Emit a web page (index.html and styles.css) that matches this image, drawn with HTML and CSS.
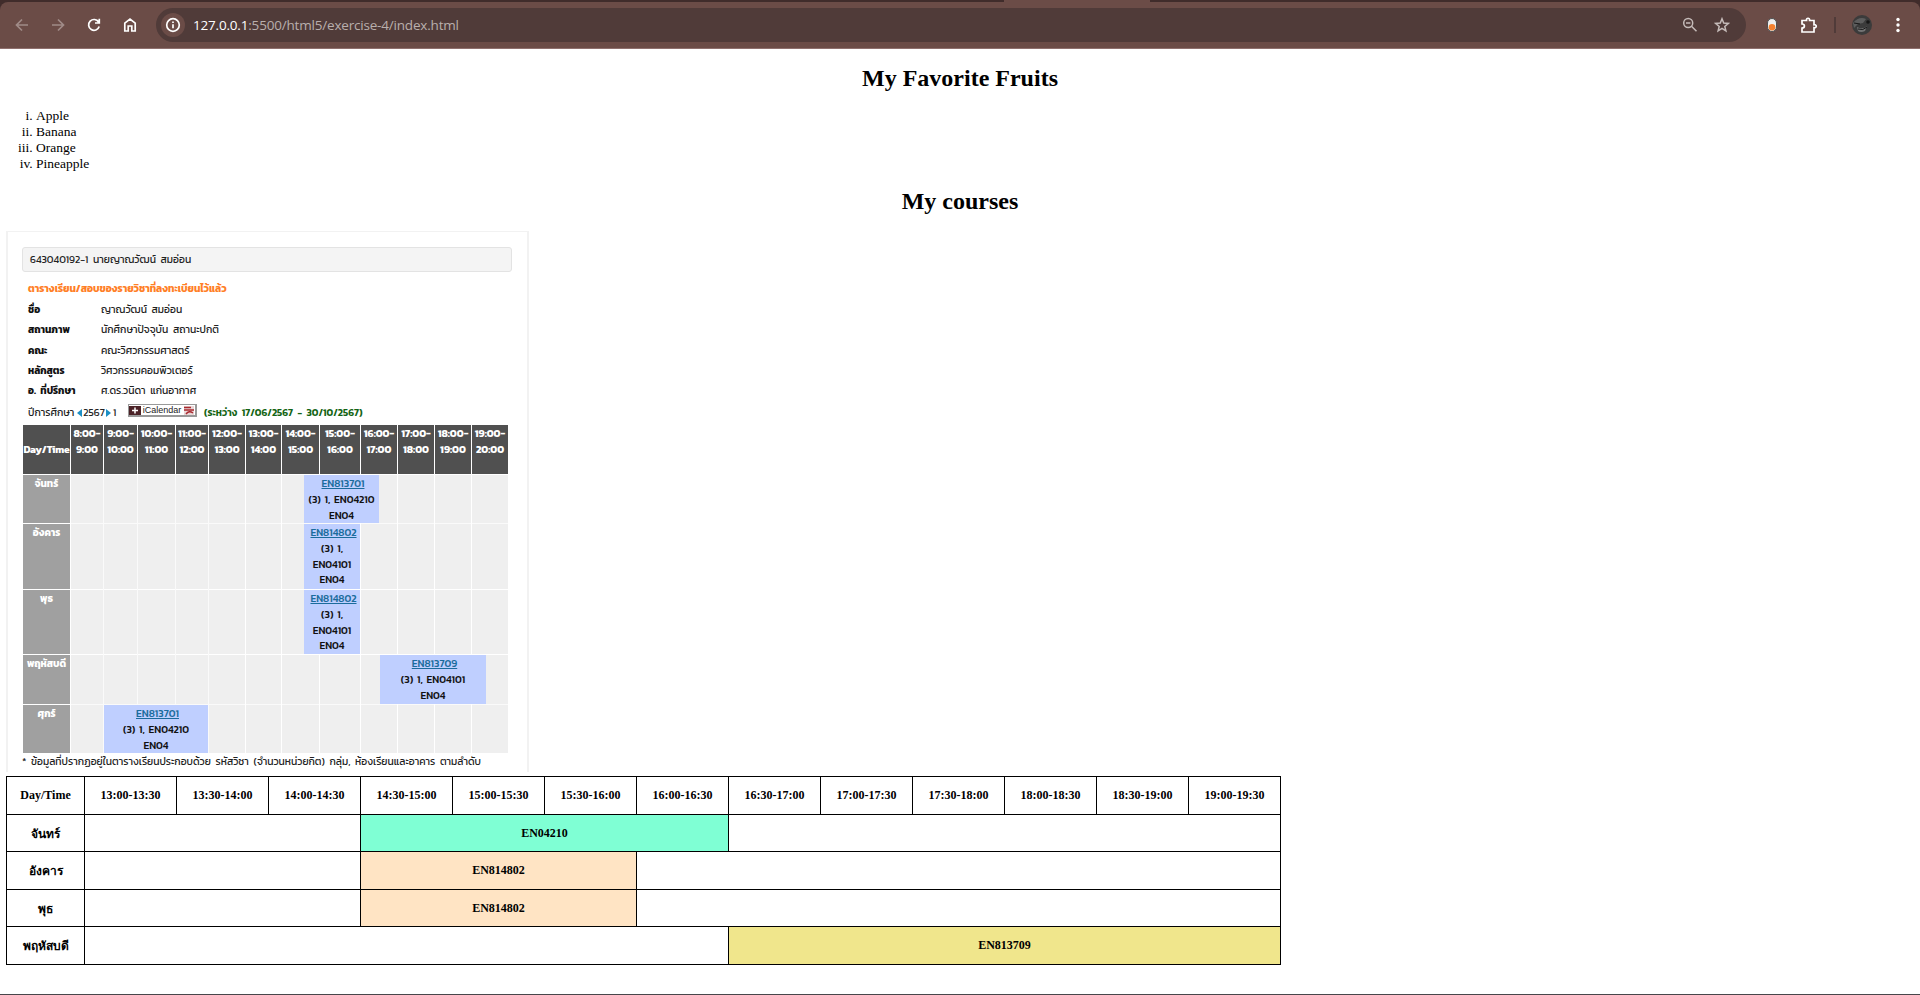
FILE: index.html
```
<!DOCTYPE html>
<html lang="th">
<head>
<meta charset="utf-8">
<title>My Favorite Fruits</title>
<link rel="stylesheet" href="styles.css">
</head>
<body>
<header class="chrome">
  <div class="tabline"><span class="tab"></span></div>
  <div class="toolbar">
    <svg class="ic dim" viewBox="0 0 16 16"><path d="M14 8H3M8 2.500 2.500 8 8 13.500"/></svg>
    <svg class="ic dim" viewBox="0 0 16 16"><path d="M2 8h11M8 2.500 13.500 8 8 13.500"/></svg>
    <svg class="ic" viewBox="0 0 16 16"><path d="M12.600 5A5.400 5.400 0 1 0 13.200 9.500M13.300 1.800V6H9"/></svg>
    <svg class="ic" viewBox="0 0 16 16"><path d="M2.800 6.200 8 2l5.200 4.200V14H9.800V9H6.200v5H2.800z"/></svg>
    <div class="omnibox">
      <span class="info"><svg class="ic" viewBox="0 0 16 16"><circle cx="8" cy="8" r="6.300"/><path d="M8 7.300v4M8 4.500v1.600"/></svg></span>
      <span class="url"><b>127.0.0.1</b>:5500/html5/exercise-4/index.html</span>
      <svg class="ic pale lens" viewBox="0 0 16 16"><circle cx="6.200" cy="6" r="4.500"/><path d="M4 6h4.400M9.500 9.300l5 5"/></svg>
      <svg class="ic pale" viewBox="0 0 16 16"><path d="m8 1.800 1.700 4.300 4.600.3-3.500 3 1.100 4.500L8 11.400l-3.900 2.500 1.100-4.500-3.500-3 4.600-.3z"/></svg>
    </div>
    <svg class="ext" viewBox="0 0 12 16"><rect x="1.500" y="1.500" width="9" height="13" rx="4.500" fill="#eee" stroke="#4c5052"/><circle cx="6" cy="10.300" r="3.300" fill="#f5812f"/></svg>
    <svg class="puzzle" viewBox="0 0 18 18"><path d="M2 4.500h4.500C6 1.500 10 1.500 9.600 4.500H14v4.200c3-.4 3 3.500 0 3V16H2v-4c3.200 0 3.200-4 0-4z"/></svg>
    <span class="sep"></span>
    <svg class="avatar" viewBox="0 0 20 20"><circle cx="10" cy="10" r="10" fill="#3b3b3b"/><path d="M1 8q6-7 13-4l-3 4-5 1-4 4z" fill="#5d5d5d"/><path d="M5 12q6 3 10-1l-2 5q-4 2-7 0z" fill="#737373"/><path d="M2 8l6 1M6 14q5 2 9-2" stroke="#171717" fill="none"/><circle cx="16" cy="7" r="1.800" fill="#161616"/></svg>
    <svg class="dots" viewBox="0 0 6 16"><circle cx="3" cy="2.500" r="1.700"/><circle cx="3" cy="8" r="1.700"/><circle cx="3" cy="13.500" r="1.700"/></svg>
  </div>
</header>
<main class="page">
  <h1>My Favorite Fruits</h1>
  <ol class="fruits"><li>Apple</li><li>Banana</li><li>Orange</li><li>Pineapple</li></ol>
  <h1 class="second">My courses</h1>
  <section class="card">
    <div class="student">643040192-1 นายญาณวัฒน์ สมอ่อน</div>
    <div class="info-title">ตารางเรียน/สอบของรายวิชาที่ลงทะเบียนไว้แล้ว</div>
    <dl class="details">
      <dt>ชื่อ</dt><dd>ญาณวัฒน์ สมอ่อน</dd>
      <dt>สถานภาพ</dt><dd>นักศึกษาปัจจุบัน สถานะปกติ</dd>
      <dt>คณะ</dt><dd>คณะวิศวกรรมศาสตร์</dd>
      <dt>หลักสูตร</dt><dd>วิศวกรรมคอมพิวเตอร์</dd>
      <dt>อ. ที่ปรึกษา</dt><dd>ศ.ดร.วนิดา แก่นอากาศ</dd>
    </dl>
    <div class="term">
      <span class="year">ปีการศึกษา</span><i class="prev"></i><span class="num">2567</span><i class="next"></i><span class="one">1</span>
      <span class="ical"><svg viewBox="0 0 12 9"><rect width="12" height="9" fill="#4b2227"/><path d="M3 4.500h6M6 1.500v6" stroke="#fff" stroke-width="1.500"/></svg><span>iCalendar</span><svg viewBox="0 0 12 9"><rect x="1" width="10" height="9" fill="#e9d6d6"/><path d="M1 1.500h7M1 4h10M3 8q3-4 7-1" stroke="#a8292f" fill="none" stroke-width="1.400"/></svg></span>
      <span class="range">(ระหว่าง 17/06/2567 - 30/10/2567)</span>
    </div>
    <div class="grid">
      <div class="h day">Day/Time</div><div class="h">8:00-<br>9:00</div><div class="h">9:00-<br>10:00</div><div class="h">10:00-<br>11:00</div><div class="h">11:00-<br>12:00</div><div class="h">12:00-<br>13:00</div><div class="h">13:00-<br>14:00</div><div class="h">14:00-<br>15:00</div><div class="h">15:00-<br>16:00</div><div class="h">16:00-<br>17:00</div><div class="h">17:00-<br>18:00</div><div class="h">18:00-<br>19:00</div><div class="h">19:00-<br>20:00</div>
      <div class="d r2">จันทร์</div><div class="d r3">อังคาร</div><div class="d r4">พุธ</div><div class="d r5">พฤหัสบดี</div><div class="d r6">ศุกร์</div>
      <div class="bg"></div>
      <div class="ev mon"><a>EN813701</a><br>(3) 1, EN04210<br>EN04</div>
      <div class="ev tue"><a>EN814802</a><br>(3) 1,<br>EN04101<br>EN04</div>
      <div class="ev wed"><a>EN814802</a><br>(3) 1,<br>EN04101<br>EN04</div>
      <div class="ev thu"><a>EN813709</a><br>(3) 1, EN04101<br>EN04</div>
      <div class="ev fri"><a>EN813701</a><br>(3) 1, EN04210<br>EN04</div>
    </div>
    <p class="note">* ข้อมูลที่ปรากฏอยู่ในตารางเรียนประกอบด้วย รหัสวิชา (จำนวนหน่วยกิต) กลุ่ม, ห้องเรียนและอาคาร ตามลำดับ</p>
  </section>
  <div class="courses">
    <div class="c">Day/Time</div><div class="c">13:00-13:30</div><div class="c">13:30-14:00</div><div class="c">14:00-14:30</div><div class="c">14:30-15:00</div><div class="c">15:00-15:30</div><div class="c">15:30-16:00</div><div class="c">16:00-16:30</div><div class="c">16:30-17:00</div><div class="c">17:00-17:30</div><div class="c">17:30-18:00</div><div class="c">18:00-18:30</div><div class="c">18:30-19:00</div><div class="c">19:00-19:30</div>
    <div class="c">จันทร์</div><div class="c s3"></div><div class="c s4 aqua">EN04210</div><div class="c s6"></div>
    <div class="c">อังคาร</div><div class="c s3"></div><div class="c s3 bisque">EN814802</div><div class="c s7"></div>
    <div class="c">พุธ</div><div class="c s3"></div><div class="c s3 bisque">EN814802</div><div class="c s7"></div>
    <div class="c">พฤหัสบดี</div><div class="c s7"></div><div class="c s6 khaki">EN813709</div>
  </div>
</main>
</body>
</html>
```
FILE: styles.css
```
* { box-sizing: border-box; }
body { margin: 0; height: 995px; overflow: hidden; display: flex; flex-direction: column; background: #fff; color: #000; font-family: "Liberation Serif", serif; }
.chrome { height: 49px; flex: none; background: #402c2b; border-bottom: 1px solid #8f706e; display: flex; flex-direction: column; }
.tabline { height: 2px; padding-left: 1004px; display: flex; }
.tab { width: 146px; background: #6b4c47; }
.toolbar { flex: 1; display: flex; align-items: center; background: #6b4c47; border-radius: 8px 8px 0 0; padding: 0 0 0 14px; }
.ic { width: 16px; height: 16px; flex: none; fill: none; stroke: #fff; stroke-width: 1.700; }
.toolbar > .ic { margin-right: 20px; }
.toolbar > .dim { stroke: #a08b88; }
.pale { stroke: #c5bbb9; stroke-width: 1.500; }
.omnibox { width: 1590px; height: 34px; margin-left: -2px; border-radius: 17px; background: #503b39; display: flex; align-items: center; padding: 0 16px 0 5px; }
.info { width: 24px; height: 24px; border-radius: 50%; background: #6b4c47; display: flex; align-items: center; justify-content: center; }
.url { flex: 1; margin-left: 8px; font: 13.500px/20px "Open Sans", sans-serif; letter-spacing: -.190px; color: #b9afad; white-space: nowrap; }
.url b { font-weight: 400; color: #fff; }
.lens { margin-right: 16px; }
.ext { width: 12px; height: 16px; margin-left: 20px; }
.puzzle { width: 18px; height: 18px; margin-left: 22px; fill: none; stroke: #fff; stroke-width: 1.700; }
.sep { width: 2px; height: 16px; margin-left: 16px; background: #503b39; }
.avatar { width: 20px; height: 20px; margin-left: 16px; }
.dots { width: 6px; height: 16px; margin-left: 23px; fill: #fff; }

.page { flex: 1; padding: 15px 6px 0; border-bottom: 1px solid #47464a; }
h1 { margin: 0; height: 28px; font-size: 24px; line-height: 28px; text-align: center; }
.fruits { margin: 16px 0 0; padding-left: 30px; list-style: lower-roman; font-size: 13.500px; line-height: 16px; }
.second { margin-top: 15px; }

.card { width: 523px; height: 541px; margin-top: 16px; padding: 15px 15px 0 14px; border: solid #f2f2f2; border-width: 1px 2px 0; font: 10.300px/16px "Kanit", "Prompt", "Inter", "Noto Sans Thai", sans-serif; word-spacing: 2.300px; color: #222; white-space: nowrap; }
.student { height: 25px; border: 1px solid #e3e3e3; border-radius: 3px; background: #f4f4f4; padding: 4px 7px; }
.info-title { margin: 7px 0 0 6px; height: 20px; line-height: 20px; color: #ff7f27; font-size: 10.100px; font-weight: 700; }
.details { margin: 0 0 0 6px; height: 102px; display: grid; grid-template-columns: 73px 1fr; grid-auto-rows: 20.300px; line-height: 21px; }
.details dt { font-size: 10px; font-weight: 700; color: #111; }
.details dd { margin: 0; }
.term { display: flex; align-items: center; height: 24px; margin-left: 6px; }
.year { width: 49px; }
.prev, .next { border: 4px solid transparent; }
.prev { border-left: 0; border-right: 5px solid #1c8fc4; }
.next { border-right: 0; border-left: 5px solid #1c8fc4; }
.num { width: 24px; text-align: center; }
.one { width: 15px; margin-left: 1px; padding-left: 1px; }
.ical { width: 69px; height: 13px; margin: -5px 7px 0 1px; display: flex; align-items: center; justify-content: space-between; border: 1px solid #999; border-width: 1px 2px 2px 1px; background: #fff; font: 9px/10px "Liberation Sans", sans-serif; }
.ical svg { width: 12px; height: 9px; }
.range { color: #146414; font-size: 10px; font-weight: 600; }
.grid { width: 485px; height: 328px; margin-left: 1px; display: grid; gap: 1px; grid-template-columns: 47px 32px 33px 37px 32px 36px 35px 37px 40px 36px 36px 36px 36px; grid-template-rows: 49px 48px 65px 64px 49px 48px; text-align: center; }
.h { background: #505050; color: #fff; font-size: 10.400px; font-weight: 700; line-height: 16px; padding-top: 1px; }
.day { padding-top: 17px; letter-spacing: -.150px; }
.d { grid-column: 1; background: #a0a0a0; color: #fff; font-size: 10px; font-weight: 700; padding-top: 1px; }
.r2 { grid-row: 2; } .r3 { grid-row: 3; } .r4 { grid-row: 4; } .r5 { grid-row: 5; } .r6 { grid-row: 6; }
.bg { grid-column: 2 / -1; grid-row: 2 / -1; background:
  linear-gradient(#fafafa, #fafafa) 32px 0 / 1px 100% no-repeat, linear-gradient(#fafafa, #fafafa) 66px 0 / 1px 100% no-repeat,
  linear-gradient(#fafafa, #fafafa) 104px 0 / 1px 100% no-repeat, linear-gradient(#fafafa, #fafafa) 137px 0 / 1px 100% no-repeat,
  linear-gradient(#fff, #fff) 174px 0 / 1px 100% no-repeat, linear-gradient(#fff, #fff) 210px 0 / 1px 100% no-repeat,
  linear-gradient(#fff, #fff) 248px 0 / 1px 100% no-repeat, linear-gradient(#fff, #fff) 289px 0 / 1px 100% no-repeat,
  linear-gradient(#fff, #fff) 326px 0 / 1px 100% no-repeat, linear-gradient(#fff, #fff) 363px 0 / 1px 100% no-repeat,
  linear-gradient(#fff, #fff) 400px 0 / 1px 100% no-repeat, linear-gradient(#fafafa, #fafafa) 0 48px / 100% 1px no-repeat,
  linear-gradient(#fff, #fff) 0 114px / 100% 1px no-repeat, linear-gradient(#fff, #fff) 0 179px / 100% 1px no-repeat,
  linear-gradient(#fafafa, #fafafa) 0 229px / 100% 1px no-repeat, #efefef; }
.ev { background: #bfcfff; color: #111; font-weight: 500; line-height: 15.800px; padding-top: 1px; word-spacing: 1.500px; }
.ev a { color: #1b6c9c; text-decoration: underline; margin-left: 3px; }
.mon { grid-area: 2 / 8 / 3 / 11; margin: 0 18px 0 22px; }
.tue { grid-area: 3 / 8 / 4 / 10; margin-left: 22px; }
.wed { grid-area: 4 / 8 / 5 / 10; margin-left: 22px; }
.thu { grid-area: 5 / 10 / 6 / 14; margin: 0 22px 0 19px; }
.fri { grid-area: 6 / 3 / 7 / 6; }
.note { margin: 0; line-height: 18px; }

.courses { width: 1275px; margin-top: 4px; padding: 1px; display: grid; gap: 1px; grid-template-columns: 77px repeat(13, 91px); grid-template-rows: 37px 36px 37px 36px 37px; background: #000; font-size: 12px; font-weight: 700; }
.c { background: #fff; display: flex; align-items: center; justify-content: center; white-space: nowrap; }
.s3 { grid-column: span 3; } .s4 { grid-column: span 4; } .s6 { grid-column: span 6; } .s7 { grid-column: span 7; }
.aqua { background: #7fffd4; }
.bisque { background: #ffe4c4; }
.khaki { background: #f0e68c; }
```
